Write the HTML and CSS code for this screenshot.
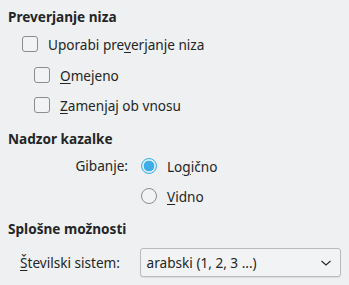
FILE: index.html
```html
<!DOCTYPE html>
<html>
<head>
<meta charset="utf-8">
<link rel="stylesheet" href="styles.css">
</head>
<body>
<div class="page">
  <div class="heading h1">Preverjanje niza</div>
  <div class="row r-use"><span class="cb"></span><span>Uporabi pre<u>v</u>erjanje niza</span></div>
  <div class="row r-sub"><span class="cb"></span><span><u>O</u>mejeno</span></div>
  <div class="row r-sub r-sub2"><span class="cb"></span><span><u>Z</u>amenjaj ob vnosu</span></div>

  <div class="heading h2">Nadzor kazalke</div>
  <div class="form">
    <div class="label">Gibanje:</div>
    <div class="radios">
      <div class="rrow"><span class="rb on"></span><span>Lo<u>g</u>ično</span></div>
      <div class="rrow r2"><span class="rb"></span><span><u>V</u>idno</span></div>
    </div>
  </div>

  <div class="heading h3">Splošne možnosti</div>
  <div class="crow">
    <span class="clabel"><u>Š</u>tevilski sistem:</span>
    <div class="combo">
      <span>arabski (1, 2, 3 ...)</span>
      <svg width="12" height="8" viewBox="0 0 12 8"><path d="M1.5 2 L6 6 L10.5 2" fill="none" stroke="#232627" stroke-width="1.1"/></svg>
    </div>
  </div>
</div>
</body>
</html>
```
FILE: styles.css
```css
html, body { margin: 0; padding: 0; }
body {
  background: #eff0f1;
  width: 349px;
  height: 285px;
  overflow: hidden;
  font-family: "Noto Sans", sans-serif;
  font-size: 13.6px;
  color: #232627;
}
u { text-decoration: underline; text-underline-offset: 2px; text-decoration-thickness: 1px; }
.page { padding: 0 8px; }
.heading { font-weight: bold; line-height: 18px; }
.h1 { padding-top: 8px; }
.h2 { margin-top: 17px; }
.h3 { margin-top: 16px; }
.row { display: flex; align-items: center; height: 16px; }
.r-use { margin-top: 10px; padding-left: 14px; }
.r-sub { margin-top: 15px; padding-left: 26px; }
.r-sub2 { margin-top: 14px; }
.cb {
  width: 14px; height: 14px;
  border: 1px solid #8a8d8f;
  border-radius: 3px;
  background: #f2f3f4;
  margin-right: 10px;
  flex: none;
}
.form { display: flex; margin-top: 10px; }
.label { width: 120px; text-align: right; line-height: 16px; }
.radios { margin-left: 13px; display: flex; flex-direction: column; }
.rrow { display: flex; align-items: center; height: 16px; }
.r2 { margin-top: 14px; }
.rb {
  width: 14px; height: 14px;
  border: 1px solid #8a8d8f;
  border-radius: 50%;
  background: #f2f3f4;
  margin-right: 10px;
  flex: none;
}
.rb.on {
  border-color: #3daee9;
  background: radial-gradient(circle, #3daee9 0 5px, #d6ecf9 5.6px 100%);
}
.crow { display: flex; align-items: center; margin-top: 10px; padding-left: 12px; }
.clabel { width: 120px; }
.combo {
  width: 186px; height: 27px;
  border: 1px solid #b8babc;
  border-radius: 3px;
  background: #f2f3f4;
  display: flex; align-items: center; justify-content: space-between;
  padding: 0 8px 0 6px;
  box-shadow: 0 1px 1px rgba(0,0,0,0.08);
}
.combo svg { display: block; }
```
